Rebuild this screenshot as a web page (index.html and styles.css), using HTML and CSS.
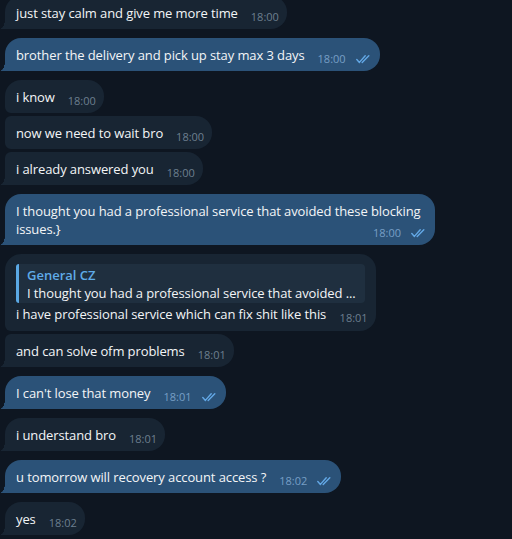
FILE: index.html
```html
<!DOCTYPE html>
<html lang="en">
<head>
<meta charset="utf-8">
<title>Chat</title>
<link rel="stylesheet" href="styles.css">
</head>
<body>
<div class="chat">
  <div class="group">
    <div class="msg in last">just stay calm and give me more time<span class="meta">18:00</span></div>
  </div>
  <div class="group">
    <div class="msg out last">brother the delivery and pick up stay max 3 days<span class="meta">18:00<svg class="checks" width="14" height="9" viewBox="0 0 14 9"><path d="M0.8 4.6 L3.4 7.4 L9.2 0.8 M6.2 7.4 L12.8 0.8"/></svg></span></div>
  </div>
  <div class="group">
    <div class="msg in first">i know<span class="meta">18:00</span></div>
    <div class="msg in mid">now we need to wait bro<span class="meta">18:00</span></div>
    <div class="msg in last">i already answered you<span class="meta">18:00</span></div>
  </div>
  <div class="group">
    <div class="msg out last">I thought you had a professional service that avoided these blocking issues.}<span class="meta">18:00<svg class="checks" width="14" height="9" viewBox="0 0 14 9"><path d="M0.8 4.6 L3.4 7.4 L9.2 0.8 M6.2 7.4 L12.8 0.8"/></svg></span></div>
  </div>
  <div class="group">
    <div class="msg in first reply">
      <div class="quote">
        <div class="quote-name">General CZ</div>
        <div class="quote-text">I thought you had a professional service that avoided ...</div>
      </div>
      <div class="reply-body">i have professional service which can fix shit like this<span class="meta">18:01</span></div>
    </div>
    <div class="msg in last">and can solve ofm problems<span class="meta">18:01</span></div>
  </div>
  <div class="group">
    <div class="msg out last">I can't lose that money<span class="meta">18:01<svg class="checks" width="14" height="9" viewBox="0 0 14 9"><path d="M0.8 4.6 L3.4 7.4 L9.2 0.8 M6.2 7.4 L12.8 0.8"/></svg></span></div>
  </div>
  <div class="group">
    <div class="msg in last">i understand bro<span class="meta">18:01</span></div>
  </div>
  <div class="group">
    <div class="msg out last">u tomorrow will recovery account access ?<span class="meta">18:02<svg class="checks" width="14" height="9" viewBox="0 0 14 9"><path d="M0.8 4.6 L3.4 7.4 L9.2 0.8 M6.2 7.4 L12.8 0.8"/></svg></span></div>
  </div>
  <div class="group">
    <div class="msg in last">yes<span class="meta">18:02</span></div>
  </div>
</div>
</body>
</html>
```

FILE: styles.css
```css
html, body {
  margin: 0;
  background: #0e1621;
  font-family: "Open Sans", "Liberation Sans", sans-serif;
  overflow: hidden;
}

.chat {
  display: flex;
  flex-direction: column;
  align-items: flex-start;
  gap: 9px;
  margin-top: -4px;
  padding-left: 5px;
}

.group {
  display: flex;
  flex-direction: column;
  align-items: flex-start;
  gap: 3px;
}

.msg {
  position: relative;
  box-sizing: border-box;
  max-width: 430px;
  padding: 8px 11px 7px 11px;
  border-radius: 16px;
  font-size: 13px;
  line-height: 18px;
  letter-spacing: -0.1px;
  color: #f3f5f7;
}

.in { background: #182533; --bubble: #182533; }
.out { background: #2b5278; --bubble: #2b5278; }

.first { border-bottom-left-radius: 6px; }
.mid { border-top-left-radius: 6px; border-bottom-left-radius: 6px; }
.last { border-bottom-left-radius: 0; }
.mid + .last, .first + .last { border-top-left-radius: 6px; }

.last::before {
  content: "";
  position: absolute;
  left: -5px;
  bottom: 0;
  width: 5px;
  height: 10px;
  background: radial-gradient(ellipse 5px 10px at 0 0, transparent 96%, var(--bubble) 100%);
}

.meta {
  float: right;
  margin: 4px -3px -4px 13px;
  font-size: 11px;
  line-height: 18px;
  letter-spacing: 0;
  color: #6d7f8f;
  white-space: nowrap;
}

.out .meta {
  color: #779fc6;
  margin-right: -1px;
}

.checks {
  margin-left: 10px;
  vertical-align: -1px;
}

.checks path {
  fill: none;
  stroke: #63a8e6;
  stroke-width: 1.4;
  stroke-linecap: round;
  stroke-linejoin: round;
}

.reply { padding-bottom: 8px; }

.quote {
  margin-top: 2px;
  padding: 2px 9px 1px 8px;
  background: #1f2f3f;
  border-left: 3px solid #5aa8e4;
  border-radius: 3px 4px 4px 3px;
}

.quote-name {
  font-weight: 600;
  color: #5fabe8;
  letter-spacing: 0;
}

.quote-text {
  white-space: nowrap;
}

.reply-body {
  margin-top: 2px;
}
```
